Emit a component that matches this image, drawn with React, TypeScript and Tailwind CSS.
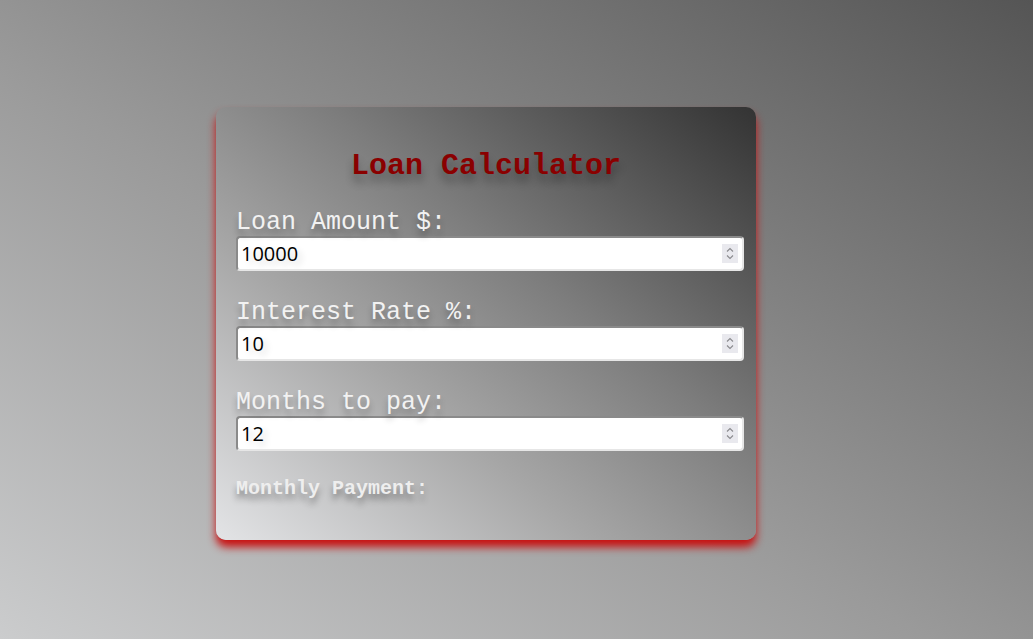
import React, { useState } from 'react';

function Spin() {
  return (
    <div className="flex h-[19px] w-[16px] items-center justify-center bg-[#e9e9ee]">
      <svg width="10" height="15" viewBox="0 0 10 15" fill="none" stroke="#8a8a8e" strokeWidth="1.1">
        <path d="M2 5.5 L5 2.5 L8 5.5" />
        <path d="M2 9.5 L5 12.5 L8 9.5" />
      </svg>
    </div>
  );
}

function Field({ label, value, onChange }: { label: string; value: string; onChange: (v: string) => void }) {
  return (
    <div>
      <label className="block translate-y-[2px] text-[25px] leading-[28px] text-[#f2f2f2] [text-shadow:0_6px_6px_rgba(0,0,0,0.3)]">
        {label}
      </label>
      <div className="mt-[1px] flex h-[35px] w-[508px] items-center rounded-[4px] border-2 border-t-[#8a8a8a] border-l-[#8a8a8a] border-r-[#e6e6e6] border-b-[#e6e6e6] bg-white pr-[4px]">
        <input
          type="text"
          value={value}
          onChange={(e) => onChange(e.target.value)}
          className="min-w-0 flex-1 bg-transparent pl-[3px] text-[20px] text-black outline-none [text-shadow:4px_4px_6px_rgba(0,0,0,0.15)]"
          style={{ fontFamily: '"Open Sans", "Noto Sans", sans-serif' }}
        />
        <Spin />
      </div>
    </div>
  );
}

export default function App() {
  const [amount, setAmount] = useState('10000');
  const [rate, setRate] = useState('10');
  const [months, setMonths] = useState('12');

  return (
    <div className="h-[639px] w-full overflow-hidden bg-[linear-gradient(to_top_right,#cbcccd,#9a9a9a_45%,#555555)] pt-[107px]">
      <div
        className="ml-[216px] w-[540px] rounded-[10px] bg-[linear-gradient(to_top_right,#e3e4e6,#a6a6a6_35%,#7d7d7d_60%,#333333)] px-[20px] pb-[40px] pt-[42px] shadow-[0_7px_9px_#c81010]"
        style={{ fontFamily: '"Liberation Mono", "Courier New", monospace' }}
      >
        <h1 className="text-center text-[30px] font-bold leading-[34px] text-[#8a0000] [text-shadow:0_8px_8px_rgba(0,0,0,0.3)]">
          Loan Calculator
        </h1>
        <div className="mt-[24px] flex flex-col gap-[26px]">
          <Field label="Loan Amount $:" value={amount} onChange={setAmount} />
          <Field label="Interest Rate %:" value={rate} onChange={setRate} />
          <Field label="Months to pay:" value={months} onChange={setMonths} />
        </div>
        <div className="mt-[27px] text-[20px] font-bold leading-[22px] text-[#eeeeee] [text-shadow:0_6px_6px_rgba(0,0,0,0.35)]">
          Monthly Payment:
        </div>
      </div>
    </div>
  );
}
